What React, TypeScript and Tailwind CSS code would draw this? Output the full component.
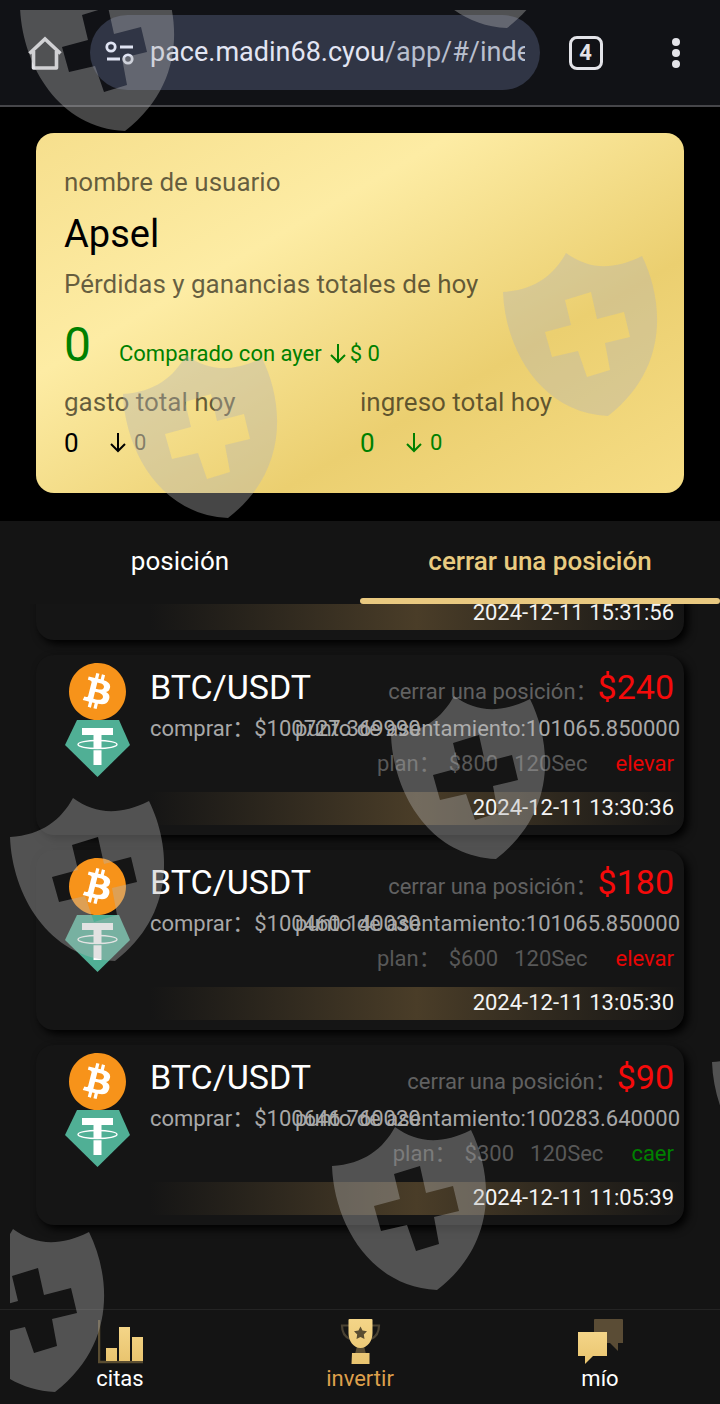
import type { ReactNode } from 'react'
import { SiBitcoin } from 'react-icons/si'
import { clsx } from 'clsx'

type Trade = {
  amount: string
  buy: string
  settle: string
  plan: string
  side: 'elevar' | 'caer'
  date: string
}

const trades: Trade[] = [
  { amount: '$240', buy: '$100727.369990', settle: '101065.850000', plan: '$800', side: 'elevar', date: '2024-12-11 13:30:36' },
  { amount: '$180', buy: '$100460.140030', settle: '101065.850000', plan: '$600', side: 'elevar', date: '2024-12-11 13:05:30' },
  { amount: '$90', buy: '$100646.760020', settle: '100283.640000', plan: '$300', side: 'caer', date: '2024-12-11 11:05:39' },
]

// top left corner of every watermark shield
const shields = [
  [10, -42],
  [392, -145],
  [493, 243],
  [113, 345],
  [381, 686],
  [0, 788],
  [322, 1117],
  [-60, 1219],
  [702, 1013],
]

function HomeIcon() {
  return (
    <svg viewBox="0 0 34 34" className="size-[34px]" fill="none" stroke="#e3e3e8" strokeWidth="3.6" strokeLinejoin="round">
      <path d="M1.5 17.5 17 3l15.5 14.5" strokeLinejoin="miter" />
      <path d="M5.5 15v17h23V15" />
    </svg>
  )
}

function TuneIcon() {
  return (
    <svg viewBox="0 0 30 26" className="h-[26px] w-[30px] shrink-0" fill="none" stroke="#dfe3f2" strokeWidth="2.8">
      <circle cx="6" cy="7" r="4.2" />
      <path d="M15 7h13M2 19h13" />
      <circle cx="23" cy="19" r="4.2" />
    </svg>
  )
}

function ArrowDown() {
  return (
    <svg viewBox="0 0 16 20" className="h-5 w-4 shrink-0" fill="none" stroke="currentColor" strokeWidth="2">
      <path d="M8 0v18M1 11l7 7 7-7" />
    </svg>
  )
}

function TetherIcon() {
  return (
    <svg viewBox="0 0 65 57" className="h-[57px] w-[65px]">
      <path d="M12 0h42l11 25-32.500 32L0 25z" fill="#50af95" />
      <path d="M17 8h31v7H36.500v30h-8V15H17z" fill="#fff" />
      <path d="M28 29.500h9" stroke="#50af95" strokeWidth="1.500" />
      <ellipse cx="32.500" cy="24.500" rx="19.500" ry="4" fill="none" stroke="#fff" strokeWidth="1.400" />
    </svg>
  )
}

function GoldFill({ id }: { id: string }) {
  return (
    <defs>
      <linearGradient id={id} x1="0" y1="0" x2="0" y2="1">
        <stop offset="0" stopColor="#f4d588" />
        <stop offset="1" stopColor="#e9c46f" />
      </linearGradient>
    </defs>
  )
}

function ChartIcon() {
  return (
    <svg viewBox="0 0 45 45" className="size-[45px]">
      <GoldFill id="chart" />
      <path d="M1 1v42h44" fill="none" stroke="#5a4d31" strokeWidth="2.500" />
      <path d="M8 29h11v13H8zM21 8h11v34H21zM34 18h11v24H34z" fill="url(#chart)" />
    </svg>
  )
}

function TrophyIcon() {
  return (
    <svg viewBox="0 0 45 45" className="size-[45px]">
      <GoldFill id="trophy" />
      <path d="M11 6.500H4c0 6 2 11 8 13.500M34 6.500h7c0 6-2 11-8 13.500" fill="none" stroke="#4a4233" strokeWidth="2.200" />
      <path d="M19 27h7l2 8H17z" fill="#5a4d31" />
      <path d="M11.500 0h22a1 1 0 0 1 1 1v13c0 8-5 15-12 15s-12-7-12-15V1a1 1 0 0 1 1-1zM14 34h17.500v11H13.500z" fill="url(#trophy)" />
      <path d="M22.500 7.500l2 4 4.500.700-3.200 3.200.700 4.600-4-2-4 2 .700-4.600-3.200-3.200 4.500-.700z" fill="#5a4d31" />
    </svg>
  )
}

function ChatIcon() {
  return (
    <svg viewBox="0 0 45 45" className="size-[45px]">
      <GoldFill id="chat" />
      <path d="M17 0h27a1 1 0 0 1 1 1v23h-5v8l-8-8H16V1a1 1 0 0 1 1-1z" fill="#5a4c35" />
      <path d="M0 13h29v24H15l-8 8v-8H0z" fill="url(#chat)" />
    </svg>
  )
}

function Watermark() {
  return (
    <svg className="pointer-events-none absolute left-[10px] top-[10px] z-10 h-[calc(100%-10px)] w-[calc(100%-10px)]" aria-hidden="true">
      {shields.map(([x, y]) => (
        <path
          key={`${x},${y}`}
          transform={`translate(${x} ${y})`}
          fill="#b4b4b4"
          fillOpacity="0.39"
          fillRule="evenodd"
          d="M0 39C32 37 51 22 63 0c22 16 46 18 76 3 22 45 27 113-34 160C38 160 2 96 0 39zM62 47l6 25-26 7 7 25 26-6 9 26 23-7-5-27 25-6-6-25-27 7-6-27z"
        />
      ))}
    </svg>
  )
}

function AddressBar() {
  return (
    <header className="flex h-[107px] items-center border-b-2 border-[#46464a] bg-[#111216]">
      <button aria-label="Inicio" className="flex w-[90px] shrink-0 justify-center">
        <HomeIcon />
      </button>
      <button className="flex h-[75px] min-w-0 flex-1 items-center gap-[15px] rounded-full bg-[#303545] px-[15px] text-[27px]">
        <TuneIcon />
        <span className="flex-1 overflow-hidden whitespace-nowrap text-left text-[#b9bfce]">
          <span className="text-[#e2e5f3]">pace.madin68.cyou</span>/app/#/inde
        </span>
      </button>
      <button className="flex w-[91px] shrink-0 justify-center" aria-label="Pestañas">
        <span className="flex size-[34px] items-center justify-center rounded-lg border-[3px] border-[#e3e3e8] text-[22px] font-bold text-[#e3e3e8]">
          4
        </span>
      </button>
      <button className="flex w-[89px] shrink-0 flex-col items-center gap-[3px]" aria-label="Menú">
        <span className="size-2 rounded-full bg-[#e3e3e8]" />
        <span className="size-2 rounded-full bg-[#e3e3e8]" />
        <span className="size-2 rounded-full bg-[#e3e3e8]" />
      </button>
    </header>
  )
}

function SummaryCard() {
  return (
    <section className="bg-black px-9 pb-7 pt-[26px]">
      <div className="rounded-[18px] bg-[linear-gradient(150deg,#f6df8d_0%,#fdeca4_33%,#ebcf70_68%,#f6dd85_100%)] px-7 pb-[26px] pt-7 text-[26px] text-black">
        <p className="leading-[42px] text-black/60">nombre de usuario</p>
        <p className="text-[38px] leading-[62px]">Apsel</p>
        <p className="leading-[38px] text-black/60">Pérdidas y ganancias totales de hoy</p>
        <p className="flex h-[82px] items-baseline gap-7 text-[#008000]">
          <span className="text-[48px] leading-[84px]">0</span>
          <span className="flex items-center text-[22px]">
            Comparado con ayer
            <span className="pl-2">
              <ArrowDown />
            </span>
            <span className="pl-1">$ 0</span>
          </span>
        </p>
        <div className="grid grid-cols-2">
          <div>
            <p className="leading-[34px] text-black/60">gasto total hoy</p>
            <p className="flex items-center leading-[48px]">
              <span className="w-[46px]">0</span>
              <ArrowDown />
              <span className="pl-2 text-[22px] text-black/60">0</span>
            </p>
          </div>
          <div>
            <p className="leading-[34px] text-black/60">ingreso total hoy</p>
            <p className="flex items-center leading-[48px] text-[#008000]">
              <span className="w-[46px]">0</span>
              <ArrowDown />
              <span className="pl-2 text-[22px]">0</span>
            </p>
          </div>
        </div>
      </div>
    </section>
  )
}

function DateBand({ date }: { date: string }) {
  return (
    <p className="h-[33px] bg-[linear-gradient(90deg,transparent,#4a3d28_50%,transparent)] pr-[10px] text-right leading-8 text-[#f4f4f4]">
      {date}
    </p>
  )
}

function TradeCard({ trade }: { trade: Trade }) {
  return (
    <article className="flex rounded-[18px] bg-[#151515] pb-[10px] shadow-[4px_4px_8px_#000]">
      <div className="flex w-[114px] shrink-0 flex-col items-center pl-[29px] pr-5 pt-2">
        <SiBitcoin className="size-[57px] bg-[radial-gradient(circle,#fff_60%,transparent_61%)] text-[#f7931a]" />
        <TetherIcon />
      </div>
      <div className="min-w-0 flex-1 whitespace-nowrap pt-[9px]">
        <div className="flex h-[46px] items-baseline justify-between pr-[10px] leading-[46px]">
          <h2 className="text-[34px]">BTC/USDT</h2>
          <p className="text-[#616161]">
            cerrar una posición：
            <span className="text-[34px] text-[#f50a0a]">{trade.amount}</span>
          </p>
        </div>
        <div className="flex h-[38px] pr-1 leading-[38px] text-[#a8a8a8]">
          <p className="w-0 flex-1">comprar：{trade.buy}</p>
          <p className="flex w-0 flex-1 justify-end">punto de asentamiento:{trade.settle}</p>
        </div>
        <p className="flex h-8 justify-end pr-[10px] leading-8 text-[#585858]">
          <span className="pr-2">plan：</span>
          <span className="pr-4">{trade.plan}</span>
          <span className="pr-7">120Sec</span>
          <span className={clsx(trade.side === 'elevar' ? 'text-[#e60505]' : 'text-[#008000]')}>{trade.side}</span>
        </p>
        <div className="pt-3">
          <DateBand date={trade.date} />
        </div>
      </div>
    </article>
  )
}

function NavItem({ label, active, children }: { label: string; active?: boolean; children: ReactNode }) {
  return (
    <a href="#" className={clsx('flex flex-col items-center', active ? 'text-[#dfa04c]' : 'text-white')}>
      {children}
      <span className="leading-[30px]">{label}</span>
    </a>
  )
}

export default function App() {
  return (
    <div className="relative flex min-h-screen flex-col overflow-hidden bg-[#141414] font-[Roboto,'Noto_Sans_CJK_SC',sans-serif] text-[22px] text-white">
      <AddressBar />
      <SummaryCard />

      {/* Tabs */}
      <div role="tablist" className="grid grid-cols-2 text-[26px]">
        <button role="tab" aria-selected="false" className="h-[83px] pb-0.5">
          posición
        </button>
        <button role="tab" aria-selected="true" className="relative h-[83px] pb-0.5 font-medium text-[#e9cb80]">
          cerrar una posición
          <span className="absolute inset-x-0 bottom-0 h-1.5 rounded-full bg-[#e9c980]" />
        </button>
      </div>

      {/* Closed trades, scrolled so that the first card is cut by the tabs */}
      <main className="flex flex-1 flex-col gap-[15px] overflow-hidden px-9 pb-[84px]">
        <div className="-mt-[7px] rounded-b-[18px] bg-[#151515] pb-[10px] pl-[114px] shadow-[4px_4px_8px_#000]">
          <DateBand date="2024-12-11 15:31:56" />
        </div>
        {trades.map((trade) => (
          <TradeCard key={trade.date} trade={trade} />
        ))}
      </main>

      <nav className="grid h-[95px] grid-cols-3 border-t border-[#242424] pt-[9px]">
        <NavItem label="citas">
          <ChartIcon />
        </NavItem>
        <NavItem label="invertir" active>
          <TrophyIcon />
        </NavItem>
        <NavItem label="mío">
          <ChatIcon />
        </NavItem>
      </nav>

      <Watermark />
    </div>
  )
}
